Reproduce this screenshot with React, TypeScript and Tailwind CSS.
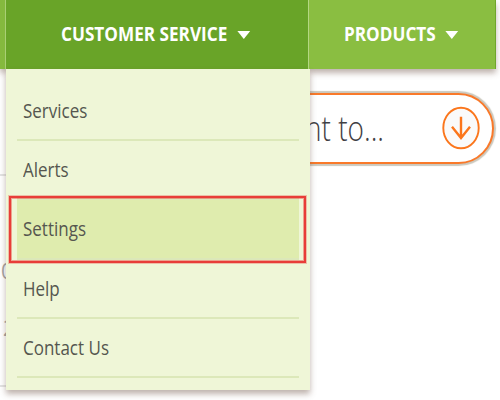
import clsx from "clsx";

const MENU_ITEMS = [
  { label: "Services" },
  { label: "Alerts" },
  { label: "Settings", active: true },
  { label: "Help" },
  { label: "Contact Us" },
];

function Caret() {
  return (
    <svg width="14" height="10" viewBox="0 0 14 10" className="shrink-0">
      <path d="M0.4 1.1h12.8L6.8 9z" fill="#fff" />
    </svg>
  );
}

function NavLabel({ text, className }: { text: string; className: string }) {
  return (
    <span
      className={clsx(
        "origin-left scale-x-[0.88] pb-[2px] text-[19.5px] leading-none font-bold whitespace-nowrap text-white",
        className
      )}
    >
      {text}
    </span>
  );
}

function DropdownMenu() {
  return (
    <div className="absolute top-[69px] left-[6px] z-10 h-[321px] w-[304px] bg-[#eff6d7] pt-[13px] pl-[11px] shadow-[0_4px_6px_0px_rgba(110,85,70,0.45)]">
      <ul className="w-[282px]">
        {MENU_ITEMS.map((item) => (
          <li
            key={item.label}
            className={clsx(
              "relative flex h-[59.2px] items-center border-b-2 border-[#dce8b9] pt-px pl-[6px]",
              item.active && "border-[#d5e4ab] bg-[#dfecae]"
            )}
          >
            <a className="origin-left scale-x-[0.85] text-[20px] leading-none whitespace-nowrap text-[#55564f]">
              {item.label}
            </a>
            {/* Highlight frame around the selected row */}
            {item.active && (
              <span className="absolute -top-[4px] -left-[8px] h-[67px] w-[297px] border-2 border-[#e83d38] shadow-[0_0_0_1px_rgba(232,61,56,0.3),inset_0_0_0_1px_rgba(232,61,56,0.45)]" />
            )}
          </li>
        ))}
      </ul>
    </div>
  );
}

export default function App() {
  return (
    <div className="relative h-[400px] w-[500px] overflow-hidden bg-white font-['Open_Sans',sans-serif]">
      {/* Navigation bar */}
      <nav className="flex h-[69px] w-[496px] shadow-[0_4px_6px_0px_rgba(110,85,70,0.45)]">
        <div className="w-[6px] border-r border-[#a9cf74] bg-[#85b93e]" />
        <div className="flex w-[302px] items-center bg-[#69a428] pl-[55px]">
          <NavLabel text="CUSTOMER SERVICE" className="w-[176px]" />
          <Caret />
        </div>
        <div className="flex w-[188px] items-center border-r border-l border-r-[#6fa52c] border-l-[#b4d782] bg-[#8abe41] pl-[35px]">
          <NavLabel text="PRODUCTS" className="w-[101px]" />
          <Caret />
        </div>
      </nav>

      {/* Search pill */}
      <div className="mt-[24px] ml-[200px] flex h-[71px] w-[294px] items-center rounded-r-[36px] border-2 border-[#f9792a] bg-white pl-[103px] shadow-[0_0_1px_2px_#cbc8bd]">
        <span className="w-[137px] origin-left scale-x-[0.8] pb-[2px] text-[35px] leading-none font-light whitespace-nowrap text-[#3f4044]">
          nt to...
        </span>
        <svg width="38" height="44" viewBox="0 0 38 44" className="mb-px shrink-0">
          <ellipse cx="19" cy="22" rx="17.7" ry="20.3" fill="#fafafa" stroke="#fb761c" strokeWidth="1.9" />
          <path d="M19 10.8v21M10 20.8l9 11.2 9-11.2" fill="none" stroke="#fb761c" strokeWidth="2.4" />
        </svg>
      </div>

      {/* Page content peeking out beside the menu */}
      <div className="mt-[10px] h-[213px] w-[20px] border-y-2 border-[#e3e3e3] pt-[85px] text-[21px] leading-none text-[#a5a3a1]">
        <p className="pl-px">0</p>
        <p className="mt-[36px] pl-[3px]">2</p>
      </div>

      <DropdownMenu />
    </div>
  );
}
